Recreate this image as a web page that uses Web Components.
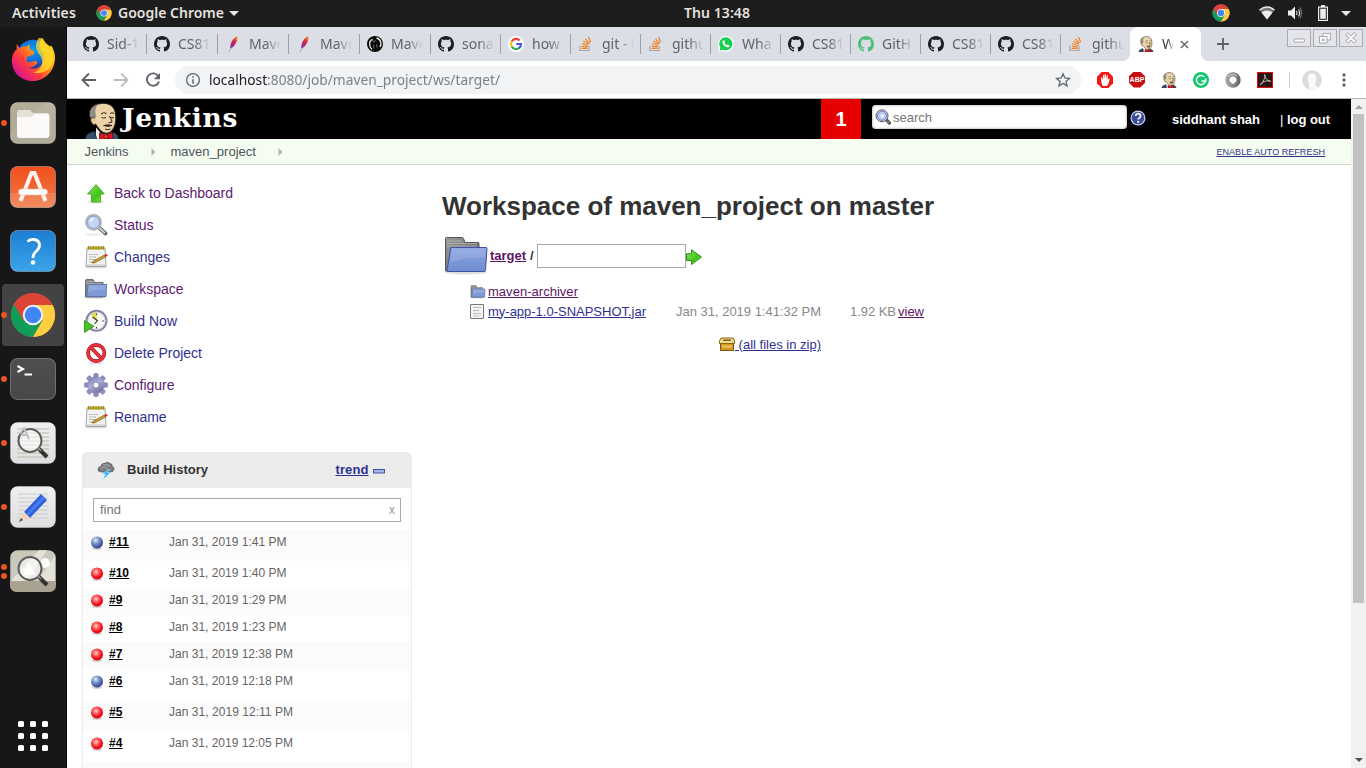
<!DOCTYPE html>
<html lang="en">
<head>
<meta charset="utf-8">
<title>Workspace of maven_project on master [Jenkins]</title>
<style>
html,body{margin:0;height:100%;overflow:hidden}
body{font-family:"Liberation Sans",Arial,sans-serif;font-size:13px;color:#333}
</style>
</head>
<body>
<desktop-shell>
  <gnome-bar slot="top"></gnome-bar>
  <side-dock slot="dock"></side-dock>
  <browser-window>
    <tab-strip slot="tabs">
      <browser-tab icon="github" first>Sid-1</browser-tab>
      <browser-tab icon="github">CS81</browser-tab>
      <browser-tab icon="feather">Mave</browser-tab>
      <browser-tab icon="feather">Mave</browser-tab>
      <browser-tab icon="mvnrepo">Mave</browser-tab>
      <browser-tab icon="github" narrow>sona</browser-tab>
      <browser-tab icon="google" narrow>how</browser-tab>
      <browser-tab icon="stack" narrow>git - l</browser-tab>
      <browser-tab icon="stack" narrow>githu</browser-tab>
      <browser-tab icon="whatsapp" narrow>Wha</browser-tab>
      <browser-tab icon="github" narrow>CS81</browser-tab>
      <browser-tab icon="github" narrow style="--ink:#4cbf7b">GitH</browser-tab>
      <browser-tab icon="github" narrow>CS81</browser-tab>
      <browser-tab icon="github" narrow>CS81</browser-tab>
      <browser-tab icon="stack" narrow>githu</browser-tab>
      <browser-tab icon="butler" active>W</browser-tab>
    </tab-strip>
    <url-bar slot="toolbar"></url-bar>
    <jenkins-page>
      <side-task icon="up" w="119" visited>Back to Dashboard</side-task>
      <side-task icon="search" w="39.5" visited>Status</side-task>
      <side-task icon="notepad" w="56">Changes</side-task>
      <side-task icon="folder" w="69.5" visited>Workspace</side-task>
      <side-task icon="clock" w="63">Build Now</side-task>
      <side-task icon="forbid" w="88">Delete Project</side-task>
      <side-task icon="gear" w="60.5" visited>Configure</side-task>
      <side-task icon="notepad" w="52.5">Rename</side-task>
      <build-history slot="history">
        <build-row ball="blue" tall n="#11">Jan 31, 2019 1:41 PM</build-row>
        <build-row ball="red" n="#10">Jan 31, 2019 1:40 PM</build-row>
        <build-row ball="red" n="#9">Jan 31, 2019 1:29 PM</build-row>
        <build-row ball="red" n="#8">Jan 31, 2019 1:23 PM</build-row>
        <build-row ball="red" n="#7">Jan 31, 2019 12:38 PM</build-row>
        <build-row ball="blue" tall n="#6">Jan 31, 2019 12:18 PM</build-row>
        <build-row ball="red" tall n="#5">Jan 31, 2019 12:11 PM</build-row>
        <build-row ball="red" tall n="#4">Jan 31, 2019 12:05 PM</build-row>
        <build-row tall></build-row>
      </build-history>
      <workspace-view slot="main"></workspace-view>
    </jenkins-page>
  </browser-window>
</desktop-shell>
<script>
const UI = '"Noto Sans","Open Sans",sans-serif';

const BUTLER = `<path d="M.5 37.500c0-4.500 3-6.500 8-8l8 3 9-2 4 .5c3 1 3.500 3.500 4 6.500z" fill="#34516b" stroke="#1b2a38"/>
<path d="M4.500 11C5 5 11 1.200 18 1.200c8 0 12.500 5 12.800 13 .3 6-1 11.500-4.300 15-3 3-8 2.500-11-.5-2-2-3.500-4.500-5-6.500-4-1-5.500-6-6-11.200z" fill="#ecd4a8" stroke="#2b211b" stroke-width="1.100"/>
<path d="M4.800 14C4.500 8 7.500 4 13 2.300 10 6 10 10 11 14l-2 5-2-2z" fill="#8f8b88"/>
<path d="M9.500 16c-3-1.500-4.500 1-3.500 3.500.5 2 2 3.500 4 3.500" fill="#e6c696" stroke="#2b211b" stroke-width=".9"/>
<path d="M16 12q3-2.500 5.500-.5M25 11.500q2-1.500 4 0M16.500 15.500q2 1.200 4.500 0M25.500 15.500q1.500 1 3.500 0M24.500 14c1 3 3 4.500 2.300 6.200l-3.200.6" fill="none" stroke="#2b211b" stroke-width="1"/>
<path d="M18.500 23.500q4.500-1.700 8.500 0-3.500 2-8.500 0zM20 27q3 1.500 5.500 0" fill="#4a3528" stroke="#2b211b" stroke-width=".8"/>
<path d="M11 25.500l5 6 6 1-2 5h-9z" fill="#f4f1ec"/><path d="M9 29l3 8.500" stroke="#1b2a38"/>
<path d="M14.500 31l6 2 7-2.500.5 7-7-1.500-6.500 2z" fill="#dc1420" stroke="#5d0408" stroke-width=".7"/><circle cx="21" cy="34.500" r="2" fill="#f4303a" stroke="#5d0408" stroke-width=".6"/>`;
const CHROME = `<circle cx="24" cy="24" r="23" fill="#db4437"/><path d="M4.100 12.500A23 23 0 0 0 24 47l10-17.500-20 0z" fill="#0f9d58"/><path d="M24 47A23 23 0 0 0 44.500 13.500H24l10 16z" fill="#ffcd40"/><path d="M4.100 12.500A23 23 0 0 1 44.500 13.500H24L14 29.500z" fill="#db4437"/><circle cx="24" cy="24" r="10.700" fill="#f1f1f1"/><circle cx="24" cy="24" r="8.600" fill="#4285f4"/>`;
const ARROW = `<defs><linearGradient id="g" x1="0" y1="0" x2="1" y2="1"><stop stop-color="#8fe86a"/><stop offset=".6" stop-color="#3fc518"/><stop offset="1" stop-color="#8ef43a"/></linearGradient></defs>`;
const FOLDER = `<defs><linearGradient id="f" x1="0" y1="0" x2="0" y2="1"><stop stop-color="#89a3df"/><stop offset="1" stop-color="#6f8ed0"/></linearGradient><linearGradient id="fg" x1="0" y1="0" x2="1" y2="1"><stop stop-color="#999"/><stop offset="1" stop-color="#606060"/></linearGradient></defs>
<ellipse cx="22" cy="36" rx="21" ry="2.500" fill="#000" opacity=".13"/><path d="M1.500 35V2.500q0-1 1-1H18q1 0 1.500 1l1.500 4H34q1 0 1 1V34z" fill="url(#fg)" stroke="#555"/><path d="M3 5h15M3 7.500h30M3 10h30" stroke="#bbb" stroke-width=".7"/><path d="M7 11.500h35q1 0 1 1l-1.500 22q-.2 1-1.200 1H4q-1.500 0-1-1.500z" fill="url(#f)" stroke="#3f51a8"/><path d="M7.500 12.500h34l-.8 9Q22 21 6.500 26z" fill="#fff" opacity=".13"/>`;
const SMALL_FOLDER = `<ellipse cx="12" cy="20.500" rx="11" ry="1.200" fill="#000" opacity=".14"/><path d="M1.500 20V3.500q0-1 1-1H9l1.500 3H19V20z" fill="#858585" stroke="#6a6a6a"/><path d="M2 4.500h7M2 6.500h16" stroke="#b5b5b5" stroke-width=".8"/><path d="M4 7.500h18.500L22 19.500H2.800z" fill="#7f9ad6" stroke="#5c73b8"/><path d="M4.500 8h17.500l-.3 5Q11 12.500 4 15z" fill="#fff" opacity=".15"/>`;
const tile = (a,b,inner) => `<defs><linearGradient id="t" x1="0" y1="0" x2="0" y2="1"><stop stop-color="${a}"/><stop offset="1" stop-color="${b}"/></linearGradient></defs><rect x="1.500" y="3.500" width="45" height="41" rx="7" fill="url(#t)" stroke="#fff" stroke-opacity=".3"/>${inner}`;
const LENS = `<circle cx="21" cy="21.500" r="11.500" fill="#fff" fill-opacity=".6" stroke="#5c5c5c" stroke-width="2"/><path d="M30 30l8 8" stroke="#333" stroke-width="4"/><path d="M29 29l3 3" stroke="#888" stroke-width="2"/>`;

const ICONS = {
  github:['0 0 16 16',`<path fill="var(--ink,#1b1f23)" fill-rule="evenodd" d="M8 0C3.580 0 0 3.580 0 8c0 3.540 2.290 6.530 5.470 7.590.4.070.55-.17.55-.38 0-.19-.01-.82-.01-1.490-2.010.37-2.530-.49-2.690-.94-.09-.23-.48-.94-.82-1.130-.28-.15-.68-.52-.01-.53.63-.01 1.080.58 1.230.82.72 1.210 1.870.87 2.330.66.07-.52.28-.87.51-1.070-1.780-.2-3.640-.89-3.640-3.950 0-.87.31-1.590.82-2.150-.08-.2-.36-1.020.08-2.120 0 0 .67-.21 2.200.82.64-.18 1.320-.27 2-.27s1.360.09 2 .27c1.530-1.040 2.200-.82 2.200-.82.44 1.100.16 1.920.08 2.120.51.56.82 1.270.82 2.150 0 3.070-1.870 3.750-3.650 3.950.29.25.54.73.54 1.480 0 1.070-.01 1.930-.01 2.200 0 .21.15.46.55.38A8.010 8.010 0 0 0 16 8c0-4.420-3.580-8-8-8z"/>`],
  feather:['0 0 16 16',`<defs><linearGradient id="a" x1=".8" y1="0" x2=".2" y2="1"><stop stop-color="#f79a23"/><stop offset=".35" stop-color="#e0323a"/><stop offset=".65" stop-color="#b5206a"/><stop offset="1" stop-color="#6f4ba0"/></linearGradient></defs><path d="M12 0c1 2 .3 5-1.300 7.500C9 10 7.500 12 6 12.500l-1 0C5 10 6 6 8 3.500 9.500 1.500 11 .5 12 0z" fill="url(#a)"/><path d="M6 11.500L4.200 16" stroke="#b8a6cf"/>`],
  mvnrepo:['0 0 16 16',`<circle cx="8" cy="8" r="8" fill="#0a0a0a"/><path d="M5 13.500C1.500 10 2 5 5.500 3M9.500 2c4.500 1 5.500 6 3.500 9" stroke="#e8e8ea" stroke-width="1.300" fill="none"/><path d="M5 4.500l2 1.500 1.500-2M6.500 9l.5 3.500M9.500 8.500l.5 3" stroke="#999" stroke-width=".7" fill="none"/>`],
  google:['0 0 16 16',`<circle cx="8" cy="8" r="8" fill="#fff"/><g fill="none" stroke-width="2.200"><path d="M11.700 4.400A5 5 0 0 0 3.700 5.600" stroke="#ea4335"/><path d="M3.700 5.500a5 5 0 0 0 0 5" stroke="#fbbc05"/><path d="M3.700 10.400a5 5 0 0 0 7.800 1.300" stroke="#34a853"/><path d="M11.200 12A5 5 0 0 0 13 8H8.200" stroke="#4255f4"/></g>`],
  stack:['0 0 16 16',`<path d="M1.800 9.800v4.700h9.400V9.800" fill="none" stroke="#a9a9ad" stroke-width="1.200"/><g stroke="#f48024" stroke-width="1.200"><path d="M3.500 12.400h6.200M3.600 10.200l6.100.6M4 7.500l6 2M5.300 5l5.200 3.300M7.500 2.800l3.900 4.700M10.500 1l2.200 5.500"/></g>`],
  whatsapp:['0 0 16 16',`<path d="M0 16l1.200-4A7.800 7.800 0 1 1 4.500 15z" fill="#fff"/><path d="M1.600 14.500l.8-3A6.500 6.500 0 1 1 5 13.700z" fill="#12cf4e"/><path d="M5.200 4.500l1-.3 1 2-.7.900c.5 1 1.200 1.700 2.300 2.200l.8-.9 1.900 1c0 1.500-1.300 2-2.300 1.800C6.700 10.600 4.700 8.500 4.400 6.200c0-.7.300-1.300.8-1.700z" fill="#fff"/>`],
  butler:['0 0 34 37',BUTLER],
  chrome:['0 0 48 48',CHROME],
  firefox:['0 0 48 48',`<defs><radialGradient id="b" cx=".5" cy=".3" r=".6"><stop stop-color="#0ca0ea"/><stop offset=".6" stop-color="#1468d8"/><stop offset="1" stop-color="#20227c"/></radialGradient><linearGradient id="o" x1=".9" y1=".1" x2=".15" y2=".85"><stop stop-color="#ffe22b"/><stop offset=".4" stop-color="#ff9a17"/><stop offset=".7" stop-color="#ff3c3c"/><stop offset="1" stop-color="#dd1590"/></linearGradient></defs>
<circle cx="24" cy="22" r="18" fill="url(#b)"/><path d="M7 8l3 5q3-3 8-2l2-3 1 6 4 2v3l-7 3-1 4c3 3 6 0 9 0 2 0 3 2 2 3-2 1-3 4-8 4 7 3 14-1 15-8 1-5-1-8-3-11-2-5-1-9 2-12l0 0q2 5 8 9l1-1q4 6 4 14C46 37 36 47 24 47 12 47 2 38 2 26c0-6 2-10 5-12z" fill="url(#o)"/><path d="M30 2c-6 9-1 15 2 19 4 7 0 16-8 17 12 3 22-5 21-16-1-10-12-12-12-20z" fill="#ffdf2a" opacity=".75"/>`],
  files:['0 0 48 48',tile('#b5ae9b','#aaa490',`<path d="M1 33L38 3h2q7 0 7 7v28q0 7-7 7H8q-7 0-7-7z" fill="#fff" opacity=".09"/><path d="M8 14q0-3 3-3h9q2 0 3 2l1 1h14q2 0 2 2v20H8z" fill="#e5e1da"/><path d="M8 20q0-2 2-2h12l4-3h13q1.500 0 1.500 1.500V35q0 4-3 4H11q-3 0-3-3z" fill="#faf9f7"/>`)],
  software:['0 0 48 48',tile('#f2501e','#f07a48',`<path d="M1 30h46v8q0 7-7 7H8q-7 0-7-7z" fill="#fff" opacity=".12"/><path d="M11.500 38L22.500 10h3L36.500 38" fill="none" stroke="#fdf4ef" stroke-width="4"/><rect x="9.500" y="26" width="29" height="6" rx="3" fill="#fff" stroke="#f1b99f" stroke-width=".6"/>`)],
  help:['0 0 48 48',tile('#1d7ed0','#3aa5ea',`<path d="M18.500 14.500q3-2.500 6.500-2 5.500.8 5.500 6 0 3-3.500 6-3 2.500-3 6.500" fill="none" stroke="#fff" stroke-width="2.800"/><circle cx="24" cy="35.500" r="2.200" fill="#fff"/>`)],
  terminal:['0 0 48 48',tile('#4e4e4e','#484848',`<path d="M8.500 11l5.500 3-5.500 3M15.500 19.500H23" fill="none" stroke="#fff" stroke-width="2"/>`)],
  docview:['0 0 48 48',tile('#f0f0f0','#dedede',`<path d="M8 10h32M8 14h32M8 18h32M8 22h32M8 26h32M8 30h32M8 34h32M8 38h32" stroke="#bcb9ab"/>${LENS}<path d="M11 15L15 9l5 11M13 16h5" fill="none" stroke="#c0c0c0" stroke-width="2"/>`)],
  editor:['0 0 48 48',tile('#f0f0f0','#dedede',`<path d="M9 11h30M9 15h30M9 19h30M9 23h30M9 27h30M9 31h30M9 35h30" stroke="#ccc"/><path d="M32 11l6 6-17 18-6-6z" fill="#2e62dd"/><path d="M34 13l2 2-17 18-2-2z" fill="#4a7bf0"/><path d="M15 29l6 6-11 4z" fill="#f5d3b4"/><path d="M12 35l2 2-4 2z" fill="#444"/>`)],
  imgview:['0 0 48 48',tile('#c9c6ba','#cfcbbf',`<path d="M2 34L30 3h8L18 34zM28 34L46 9v25z" fill="#eeece4" opacity=".7"/><path d="M1 34h46v4q0 7-7 7H8q-7 0-7-7z" fill="#a9a290"/><circle cx="36" cy="16" r="5" fill="#fafafa"/>${LENS}<path d="M13 28l7-13 7 13z" fill="#fff" opacity=".8"/>`)],
  apps:['0 0 32 32',`<g fill="#fff">${[1,13,25].map(x=>[1,13,25].map(y=>`<rect x="${x}" y="${y}" width="6" height="6" rx="1.500"/>`).join('')).join('')}</g>`],
  caret:['0 0 10 5',`<path d="M0 0h10L5 5z" fill="#e6e6e6"/>`],
  wifi:['0 0 16 14',`<path d="M8 13.500L.5 4Q8-2 15.500 4z" fill="#777"/><path d="M8 13.500L2.500 6.500Q8 2.500 13.500 6.500z" fill="#eee"/><path d="M.5 4Q8-2 15.500 4" stroke="#eee" stroke-width="1.300" fill="none"/>`],
  volume:['0 0 16 14',`<path d="M1 4.500h3L8 .5v13L4 9.500H1z" fill="#eee"/><path d="M9.500 5q1.300 2 0 4M11.500 3.500q2.300 3.500 0 7" stroke="#ddd" stroke-width="1.200" fill="none"/><path d="M13 1.500q3 5.500 0 11" stroke="#777" stroke-width="1.100" fill="none"/>`],
  battery:['0 0 10 16',`<path d="M3 0h4v1.500h3V16H0V1.500h3z" fill="#eee"/><path d="M1.200 2.700h7.600v12.100H1.200z" fill="#1d1d1d"/><path d="M2.200 3.700h5.600v10.100H2.200z" fill="#eee"/>`],
  back:['0 0 16 16',`<path d="M15 8H2M8 1.500L1.500 8 8 14.500" fill="none" stroke="var(--ink,#5f6368)" stroke-width="1.900"/>`],
  fwd:['0 0 16 16',`<path d="M1 8h13M8 1.500L14.500 8 8 14.500" fill="none" stroke="#bbbdc0" stroke-width="1.900"/>`],
  reload:['0 0 16 16',`<path d="M13.500 4.500A6.200 6.200 0 1 0 14 9.500" fill="none" stroke="#5f6368" stroke-width="1.900"/><path d="M15 1v6.200H8.800z" fill="#5f6368"/>`],
  info:['0 0 16 16',`<circle cx="8" cy="8" r="6.400" fill="none" stroke="#5f6368" stroke-width="1.300"/><path d="M8 4.300v1.500M8 7.200v4.500" stroke="#5f6368" stroke-width="1.500"/>`],
  star:['0 0 16 16',`<path d="M8 1.800l1.800 4.200 4.600.4-3.500 3 1.100 4.400L8 11.500 4 13.800l1.100-4.400-3.500-3L6.200 6z" fill="none" stroke="#5f6368" stroke-width="1.300"/>`],
  stop:['0 0 16 16',`<path d="M4.700 0h6.600L16 4.700v6.600L11.300 16H4.700L0 11.300V4.700z" fill="#f21616"/><path d="M5.500 14L4.300 10 4 5.500l1-.3L6.200 8 6 3l1-.2L7.500 7l.2-5h1l.4 5 .8-4 1 .2-.2 5 1-1.700 1 .3-1 4.200L10 14z" fill="#fff"/>`],
  gram:['0 0 16 16',`<circle cx="8" cy="8" r="8" fill="#11c76f"/><path d="M11.500 5A4.600 4.600 0 1 0 12.500 9M12.900 8.900H8.500M12.700 6.500L12.500 10" fill="none" stroke="#fff" stroke-width="1.500"/>`],
  ring:['0 0 16 16',`<defs><linearGradient id="r"><stop stop-color="#aaa"/><stop offset=".6" stop-color="#808080"/><stop offset="1" stop-color="#606060"/></linearGradient></defs><circle cx="8" cy="8" r="7.700" fill="url(#r)"/><path d="M8 12Q4 10 4.500 7 5.500 4.200 8 4.200T11.500 7Q12 10 8 12z" fill="#fff"/><path d="M3 4.500q5-4 9-.5" fill="none" stroke="#c5c5c5" stroke-width="1.300"/>`],
  acrobat:['0 0 16 16',`<rect x=".5" y=".5" width="15" height="15" fill="#2b1414" stroke="#e30b0b"/><path d="M7.500 3c1.500 4 3 6 5.500 6.500 1 0 .5-1-1-.9C8.500 8.700 5.500 10 3.500 12c-.8.800.5 1 1.200-.3C6.500 9 8 6 8 3.500c0-1-.8-1-.5-.5z" fill="none" stroke="#ddd" stroke-width=".8"/>`],
  person:['0 0 20 20',`<circle cx="10" cy="10" r="9.900" fill="#dcdcdc"/><path d="M10 3.500c3.300 0 4.500 2.500 4.200 5.500-.2 2.500-1.200 4-1 5.500l2.500 2.500-2 2h-6l-1-2c.8-2 .5-3.500-.2-5C5 8 6 3.500 10 3.500z" fill="#fbfbfb"/>`],
  more:['0 0 4 16',`<g fill="#5f6368"><circle cx="2" cy="3" r="1.650"/><circle cx="2" cy="8" r="1.650"/><circle cx="2" cy="13" r="1.650"/></g>`],
  close:['0 0 10 10',`<path d="M1 1l8 8M9 1L1 9" stroke="#5f6368" stroke-width="1.500"/>`],
  plus:['0 0 12 12',`<path d="M6 0v12M0 6h12" stroke="#5f6368" stroke-width="1.900"/>`],
  wmin:['0 0 24 18',`<rect x=".5" y=".5" width="23" height="17" fill="#e4e5ea" stroke="#abacb1"/><rect x="7" y="10" width="10.500" height="3" rx="1" fill="#fff" stroke="#a5a6ab"/>`],
  wmax:['0 0 24 18',`<rect x=".5" y=".5" width="23" height="17" fill="#e4e5ea" stroke="#abacb1"/><path d="M10 4.500h7.500V11H10z" fill="#fff" stroke="#a5a6ab"/><path d="M6.500 7.500h7.500V14H6.500z" fill="#fff" stroke="#a5a6ab"/><path d="M9 10h2.500v1.500H9z" fill="#ddd" stroke="#a5a6ab" stroke-width=".7"/>`],
  wclose:['0 0 24 18',`<rect x=".5" y=".5" width="23" height="17" fill="#e4e5ea" stroke="#abacb1"/><path d="M7.500 4.500l9 9M16.500 4.500l-9 9" stroke="#a5a6ab" stroke-width="3.800"/><path d="M8 5l8 8M16 5l-8 8" stroke="#fff" stroke-width="1.900"/>`],
  search:['0 0 24 24',`<ellipse cx="9" cy="21.500" rx="8" ry="1.300" fill="#000" opacity=".08"/><path d="M15 14.500l6.500 6" stroke="#666" stroke-width="3.800" stroke-linecap="round"/><path d="M15.500 15l5 4.700" stroke="#d5d5d5" stroke-width="1.800" stroke-linecap="round"/><circle cx="9.500" cy="9.300" r="7.500" fill="#c8d8f8" stroke="#b0b0b0" stroke-width="1.800"/><circle cx="9.500" cy="9.300" r="6" fill="#c6d6f7" stroke="#7a92cc" stroke-width=".8"/><path d="M5 8.500q1-4 5-4-1 4-5 4z" fill="#fff" opacity=".7"/>`],
  find16:['0 0 16 16',`<path d="M11.500 11l3 3" stroke="#555" stroke-width="3.200" stroke-linecap="round"/><path d="M12.500 12l1.500 1.500" stroke="#aaa" stroke-linecap="round"/><circle cx="7" cy="6.800" r="6" fill="#f0f0f0" stroke="#5b5b5b"/><circle cx="7" cy="6.800" r="4.600" fill="#b9cbf3" stroke="#657fc6"/><circle cx="7.300" cy="7" r="2" fill="#e6effd"/>`],
  help16:['0 0 16 16',`<circle cx="8" cy="8" r="7.500" fill="#cbd3f5"/><circle cx="8" cy="8" r="6.300" fill="#3c4c9c"/><path d="M5.700 6q0-2.300 2.500-2.300T10.500 6q0 1.200-1.300 1.900-.9.500-.9 1.500" fill="none" stroke="#fff" stroke-width="1.700"/><circle cx="8.200" cy="11.800" r="1.100" fill="#fff"/>`],
  up:['0 0 24 24',`${ARROW}<ellipse cx="12" cy="21.300" rx="9" ry="1.300" fill="#000" opacity=".12"/><path d="M12 3.500l8.300 9.500H16.500V21H7.500v-8H3.500z" fill="url(#g)" stroke="#399a1d" stroke-width=".8"/>`],
  go:['0 0 16 16',`${ARROW}<path d="M.5 4.800h5V.8L15.500 8l-10 7.500v-4h-5z" fill="url(#g)" stroke="#2c8a14"/>`],
  notepad:['0 0 24 24',`<ellipse cx="12" cy="22.800" rx="11" ry="1" fill="#000" opacity=".1"/><path d="M3 3h18l1 18.500H2z" fill="#f3f3f1" stroke="#8a8a88" stroke-width=".8"/><path d="M3.500 1.500h17V4.500h-17z" fill="#bdb52f"/><path d="M4.500 1v3.500M7 1v3.500M9.500 1v3.500M12 1v3.500M14.500 1v3.500M17 1v3.500M19.500 1v3.500" stroke="#837b1c" stroke-width=".9"/><path d="M5 9.500h9M5 12h7M5 14.500h8M5 17h5" stroke="#bbb"/><path d="M2 20h20" stroke="#c4c4c4"/><path d="M9.500 16L20.500 10l1 2L11 17.700 8 18z" fill="#d7a32c" stroke="#7a5612" stroke-width=".7"/><path d="M20.500 10l2-1 1.300 1.500-2 1.500z" fill="#d22"/>`],
  folder:['0 -1 44 42',FOLDER],
  folder24:['0 0 24 24',SMALL_FOLDER],
  clock:['0 0 24 24',`<circle cx="12.500" cy="11.800" r="10" fill="#eeeef0" stroke="#8884a0" stroke-width="2"/><circle cx="12.500" cy="11.800" r="8.600" fill="#f8f8f5" stroke="#cac8d6" stroke-width=".8"/><path d="M12.500 12L7 5.500q4-3 6-1.500z" fill="#e2dc52"/><path d="M12.500 4.500V6M12.500 18v1.500M18.500 12H20M8.500 8l5 3.700-3 3.300" stroke="#333" stroke-width="1.100" fill="none"/><path d="M.5 11.500L10 17.300.5 23.500z" fill="#43c425" stroke="#2d8a1a" stroke-width=".8"/>`],
  forbid:['0 0 24 24',`<ellipse cx="12" cy="22.300" rx="8" ry="1.200" fill="#000" opacity=".12"/><circle cx="12.200" cy="12" r="8.200" fill="#fff" stroke="#a81016" stroke-width="3.700"/><path d="M6.500 6l11.500 12" stroke="#a81016" stroke-width="3.700"/><circle cx="12.200" cy="12" r="8.200" fill="none" stroke="#e2343a" stroke-width="2.600"/><path d="M6.500 6l11.500 12" stroke="#e2343a" stroke-width="2.600"/>`],
  gear:['0 0 24 24',`<defs><linearGradient id="k" x1="0" y1="0" x2=".6" y2="1"><stop stop-color="#6a71b0"/><stop offset=".5" stop-color="#aeb0d8"/><stop offset="1" stop-color="#75719f"/></linearGradient></defs><g fill="#8d8fc0" stroke="#77769e" stroke-width=".6">${[0,45,90,135,180,225,270,315].map(a=>`<path d="M9.300 5.500L10 .8Q12-.2 14 .8L14.700 5.500z" transform="rotate(${a} 12 12)"/>`).join('')}</g><circle cx="12" cy="12" r="8" fill="url(#k)"/><circle cx="12" cy="12" r="3" fill="#fff" stroke="#77769e" stroke-width=".8"/>`],
  storm:['0 0 18 18',`<path d="M4 11Q.5 10.500 1 8q.5-2.500 3-2.500Q4.500 2 8 2.200q2.500-2 5 .3 2.500.2 2.300 3Q17.500 6 17 8.500q-.5 2.500-4 2.500z" fill="#7c7c7e" stroke="#555" stroke-width=".7"/><path d="M3.500 7.500q4-3 7 0M6 4q4-1 7 1" stroke="#a9a9a9" fill="none" stroke-width="1"/><path d="M11 8.500L5.500 13h3l-2 5 7-6.500h-3l2.500-3z" fill="#3fb2f2" stroke="#8fdcff" stroke-width=".5"/>`],
  minus:['0 0 12 5',`<rect x=".5" y=".5" width="11" height="3.500" fill="#a8b8e0" stroke="#3b55a3"/>`],
  blue:['0 0 14 14',`<defs><radialGradient id="q" cx=".38" cy=".3" r=".7"><stop stop-color="#e8f0ee"/><stop offset=".4" stop-color="#7f98cd"/><stop offset="1" stop-color="#2b3c92"/></radialGradient></defs><ellipse cx="7" cy="12.500" rx="5" ry="1.300" fill="#000" opacity=".2"/><circle cx="7" cy="6.600" r="6" fill="url(#q)"/>`],
  red:['0 0 14 14',`<defs><radialGradient id="q" cx=".42" cy=".36" r=".65"><stop stop-color="#ffd0d0"/><stop offset=".4" stop-color="#ff5a5a"/><stop offset=".75" stop-color="#f80816"/><stop offset="1" stop-color="#d80510"/></radialGradient></defs><ellipse cx="7" cy="12.500" rx="5" ry="1.300" fill="#000" opacity=".2"/><circle cx="7" cy="6.600" r="6" fill="url(#q)"/>`],
  text:['0 0 14 16',`<rect x=".5" y=".5" width="13" height="14" rx=".5" fill="#f4f4f4" stroke="#777"/><path d="M3 3.500h8M3 6.500h6M3 9.500h8M3 12h6" stroke="#b8b8b8"/>`],
  zip:['0 0 16 14',`<path d="M1.500 5.500h13v8h-13z" fill="#d49a28" stroke="#7b5306"/><path d="M2 1h12l1.500 3v2.500H.5V4z" fill="#f0dc96" stroke="#8a6510"/><path d="M4 3.200h8" stroke="#7b5306" stroke-width="1.400"/><path d="M3 9.500h10" stroke="#edc45e" stroke-width="2"/>`],
  crumb:['0 0 5 8',`<path d="M.5 0v8L4.500 4z" fill="#b4b4b4"/>`],
};

/* Registers an element whose shadow root holds the given styles and markup. */
function element(name, css, html, after) {
  customElements.define(name, class extends HTMLElement {
    constructor() {
      super();
      this.attachShadow({mode:'open'});
    }
    connectedCallback() {
      if (this.shadowRoot.firstChild) return;
      const body = typeof html === 'function' ? html(this) : html;
      this.shadowRoot.innerHTML = `<style>*,:host{box-sizing:border-box}${css}</style>${body}`;
      if (after) after(this);
    }
  });
}
const icon = (n,w,h=w,style='') => `<ui-icon name="${n}" style="width:${w}px;height:${h}px;${style}"></ui-icon>`;
const fit = (t,w,cls='') => `<fit-text w="${w}" class="${cls}">${t}</fit-text>`;

element('ui-icon', `:host{display:block;flex:none}svg{display:block;width:100%;height:100%}`,
  el => { const [vb,body] = ICONS[el.getAttribute('name')]; return `<svg viewBox="${vb}">${body}</svg>`; });

element('desktop-shell', `:host{display:grid;grid-template:27px 741px/67px 1299px;width:1366px;height:768px;overflow:hidden}
  .t{grid-column:1/3;min-width:0}.d{min-width:0}.w{min-width:0}`,
  `<div class="t"><slot name="top"></slot></div><div class="d"><slot name="dock"></slot></div><div class="w"><slot></slot></div>`);

element('gnome-bar', `:host{display:grid;grid-template-columns:684px 66px 1fr;height:27px;background:#1d1d1d;color:#e4e2df;font:600 14px/26px ${UI}}
  div{display:flex;align-items:center;height:26px}.l{padding-left:12px}.r{justify-content:flex-end;padding-right:15px}`,
  `<div class="l">${fit('Activities',64)}${icon('chrome',16,16,'margin:0 6px 0 20px')}${fit('Google Chrome',106)}${icon('caret',10,5,'margin-left:5px')}</div>
   <div>${fit('Thu 13:48',66)}</div>
   <div class="r">${icon('chrome',18,18,'margin-right:29px')}${icon('wifi',16,14,'margin-right:12px')}${icon('volume',16,14,'margin-right:15px')}${icon('battery',10,16,'margin-right:13px')}${icon('caret',10,5)}</div>`);

element('dock-item', `:host{display:grid;grid-template-columns:7px 48px;align-items:center;height:62px;width:62px;margin-left:2px;border-radius:4px}
  :host([active]){background:#434343}.p{display:grid;gap:3px;margin-left:-1px}.p i{width:6px;height:6px;border-radius:50%;background:#e95420}
  .k{display:grid;place-items:center}`,
  el => { const n = el.getAttribute('icon'), s = n=='chrome'||n=='firefox' ? 46 : 48;
    return `<div class="p">${'<i></i>'.repeat(+el.getAttribute('dots')||0)}</div><div class="k">${icon(n,s)}</div>`; });

element('side-dock', `:host{display:flex;flex-direction:column;gap:2px;height:741px;background:#171717;padding-top:1px;box-shadow:inset -1px 0 #050505}
  dock-item{flex:none}`,
  [['firefox',0],['files',1],['software',0],['help',0],['chrome',1,'active'],['terminal',1],['docview',1],['editor',1],['imgview',2]]
   .map(([n,d,a='']) => `<dock-item icon="${n}" dots="${d}" ${a}></dock-item>`).join('') + icon('apps',32,32,'margin:auto 0 16px 17px'));

element('browser-window', `:host{display:grid;grid-template-rows:34px 38px 669px;height:741px;background:#fff}`,
  `<slot name="tabs"></slot><slot name="toolbar"></slot><slot></slot>`);

element('tab-strip', `:host{display:flex;background:#dcdee6;padding-left:8px;height:34px;min-width:0}
  .win{display:flex;gap:2px;margin:2px 3px 0 auto}`,
  `<slot></slot>${icon('plus',12,12,'margin:11px 0 0 16px')}<div class="win">${icon('wmin',24,18)}${icon('wmax',24,18)}${icon('wclose',24,18)}</div>`);

element('browser-tab', `:host{display:flex;align-items:center;flex:none;width:71px;height:34px;font:14px/34px ${UI};color:#5f6368;
   background:linear-gradient(#9d9fa6,#9d9fa6) 0 7px/1px 20px no-repeat}
  :host([narrow]){width:70px}:host([first]){background:none}
  ui-icon{margin-left:8px}
  .t{width:33px;margin-left:8px;overflow:hidden;white-space:nowrap;-webkit-mask:linear-gradient(90deg,#000 50%,transparent 98%);mask:linear-gradient(90deg,#000 50%,transparent 98%)}
  :host([active]){background:#fff;border-radius:8px 8px 0 0;color:#3c4043;position:relative}
  :host([active])::before,:host([active])::after{content:"";position:absolute;bottom:0;width:8px;height:8px}
  :host([active])::before{left:-8px;background:radial-gradient(circle at 0 0,transparent 8px,#fff 8px)}
  :host([active])::after{right:-8px;background:radial-gradient(circle at 100% 0,transparent 8px,#fff 8px)}
  :host([active]) .t{width:12px}`,
  el => `${icon(el.getAttribute('icon'),16)}<div class="t"><slot></slot></div>${el.hasAttribute('active')?icon('close',9,9,'margin-left:6px'):''}`);

element('url-bar', `:host{display:flex;align-items:center;height:38px;background:#fff;border-bottom:1px solid #b3b5b8;font:14.500px/28px ${UI};color:#7c8085}
  .box{display:flex;align-items:center;width:906px;height:28px;border-radius:14px;background:#f1f3f4;margin-left:14px;padding:0 10px;flex:none}
  .addr{margin:-2px 0 0 8px}b{font-weight:400;color:#202124}
  .abp{width:16px;height:16px;background:#c70d12;clip-path:polygon(30% 0,70% 0,100% 30%,100% 70%,70% 100%,30% 100%,0 70%,0 30%);color:#fff;font:700 7px/16px "Liberation Sans",sans-serif;text-align:center;margin-right:16px}`,
  `${icon('back',16,16,'margin-left:14px')}${icon('fwd',16,16,'margin-left:16px')}${icon('reload',16,16,'margin-left:16px')}
   <div class="box">${icon('info',16)}<span class="addr">${fit('<b>localhost</b>:8080/job/maven_project/ws/target/',291)}</span>${icon('star',16,16,'margin-left:auto')}</div>
   ${icon('stop',16,16,'margin:0 16px')}<div class="abp">ABP</div>${icon('butler',16,16,'margin-right:16px')}${icon('gram',16,16,'margin-right:16px')}${icon('ring',16,16,'margin-right:16px')}${icon('acrobat',16,16,'margin-right:16px')}
   <i style="width:1px;height:16px;background:#d0d0d3;margin-right:12px"></i>${icon('person',20,20,'margin-right:20px')}${icon('more',4,16)}`);

element('jenkins-page', `:host{display:grid;grid-template:40px 26px 603px/1284px 15px;height:669px;min-width:0}
  page-head,crumb-trail,.body{grid-column:1}page-scroll{grid-column:2;grid-row:1/4}
  .body{display:grid;grid-template-columns:360px 1fr;overflow:hidden}
  .side{padding:12px 0 0 15px}.tasks{height:275px}`,
  `<page-head></page-head><crumb-trail></crumb-trail>
   <div class="body"><div class="side"><div class="tasks"><slot></slot></div><slot name="history"></slot></div><slot name="main"></slot></div>
   <page-scroll></page-scroll>`);

element('page-head', `:host{display:flex;height:40px;background:#000;color:#fff;font-weight:700}
  .logo{display:flex;width:754px;padding-left:18px;overflow:hidden}
  .name{font:700 26.500px/37px "DejaVu Serif",serif;margin-left:3px}
  .n{width:40px;background:#e60000;text-align:center;font-size:20px;line-height:40px}
  .q{display:flex;align-items:center;width:255px;height:24px;margin:6px 3px 0 11px;padding:0 3px;border-radius:4px;background:#fff;box-shadow:inset 0 0 3px #999;color:#757575;font-weight:400}
  .u{line-height:41px;margin-left:26px}.o{line-height:41px;margin-left:20px}.o i{font:400 13px/41px "Liberation Sans"}`,
  `<div class="logo">${icon('butler',34,37,'margin-top:3px')}${fit('Jenkins',116,'name')}</div><div class="n">1</div>
   <div class="q">${icon('find16',16)}<span style="margin-left:2px">${fit('search',39)}</span></div>${icon('help16',16,16,'margin-top:11px')}
   <div class="u">${fit('siddhant shah',88)}</div><div class="o">${fit('<i>|</i> log out',50)}</div>`);

element('crumb-trail', `:host{display:flex;align-items:center;height:26px;background:#f5fdf1;border-bottom:1px solid #d0d6cd;color:#4d545d;padding:0 26px 0 17.500px}
  a{margin-left:auto;font-size:9px;color:#33338c;text-decoration:underline}`,
  `${fit('Jenkins',44)}${icon('crumb',5,8,'margin:1px 15px 0 22px')}${fit('maven_project',85.5)}${icon('crumb',5,8,'margin:1px 0 0 22px')}<a>${fit('ENABLE AUTO REFRESH',108.5)}</a>`);

element('page-scroll', `:host{display:flex;flex-direction:column;align-items:center;background:#f1f1f1}
  .th{width:11px;height:489px;background:#c1c1c1;margin-top:5px}
  .a{width:0;border:4px solid transparent;border-top:0;border-bottom:4px solid #a3a3a3;margin-top:6px}
  .z{width:0;border:4px solid transparent;border-bottom:0;border-top:4px solid #505050;margin:auto 0 6px}`,
  `<i class="a"></i><div class="th"></div><i class="z"></i>`);

element('side-task', `:host{display:flex;align-items:center;height:32px;font-size:14px;color:#2f3190;padding-left:2px}
  :host([visited]){color:#5c2070}ui-icon{margin-right:6px}`,
  el => { const n = el.getAttribute('icon'); return icon(n=='folder'?'folder24':n,24) + fit(el.textContent,el.getAttribute('w')); });

element('build-history', `:host{display:block;width:330px;height:400px;border:1px solid #ececec;border-radius:5px 5px 0 0}
  .h{display:flex;align-items:center;height:35px;background:#ececec;font-weight:700;padding:0 0 2px 14px}
  .h a{color:#2f3190;text-decoration:underline;margin-left:127.500px}
  .f{display:flex;justify-content:space-between;width:308px;height:24px;border:1px solid #a9a9a9;margin:10px 0 8px 10px;padding:0 5px 0 6px;line-height:22px;color:#757575}.f i{font-style:normal;color:#999;font-size:12px}`,
  `<div class="h">${icon('storm',18)}<span style="margin-left:12px">${fit('Build History',81)}</span><a>${fit('trend',33)}</a>${icon('minus',12,5,'margin:4px 0 0 4px')}</div>
   <div class="f">${fit('find',21)}<i>x</i></div><slot></slot>`);

element('build-row', `:host{display:flex;height:27px;padding-left:7px;font-size:12px;line-height:24px;color:#666}
  :host([tall]){height:31px}:host(:nth-child(odd)){background:#fbfbfb}
  ui-icon{margin-top:6px}b{width:60px;margin-left:5px;color:#000;text-decoration:underline}`,
  el => el.hasAttribute('n') ? `${icon(el.getAttribute('ball'),14)}<b>${fit(el.getAttribute('n'),el.getAttribute('n').length==3?20:13.500)}</b>${fit(el.textContent,el.textContent.length>20?124:117.500)}` : '');

element('workspace-view', `:host{display:block;padding:23px 0 0 15px}
  h1{margin:0;height:37px;font:700 26px/37px "Liberation Sans",sans-serif;color:#333}
  a{color:#2f3190;text-decoration:underline}a.v{color:#5c1766}
  .p{display:flex;align-items:center;height:40px;margin:11px 0 5px 2px;font-weight:700}
  .p a,.p span{margin-top:-2px}
  .p s{width:149px;height:24px;border:1px solid #a9a9a9;margin:0 0 0 3px}
  .r{display:flex;align-items:center;height:20px;padding-left:28px;color:#888}
  .r ui-icon{margin-top:1px}
  .z{display:flex;align-items:center;height:20px;margin:13px 0 0 277px}`,
  `<h1>${fit('Workspace of maven_project on master',492)}</h1>
   <div class="p">${icon('folder',44,42)}<a class="v" style="margin-left:2px">${fit('target',36)}</a><span style="margin-left:4px">/</span><s></s>${icon('go',16,16,'margin-top:2px')}</div>
   <div class="r">${icon('folder24',16,16,'margin-right:2px')}<a class="v">${fit('maven-archiver',90)}</a></div>
   <div class="r">${icon('text',14,16,'margin-right:4px')}<a>${fit('my-app-1.0-SNAPSHOT.jar',158)}</a><span style="margin-left:30px">${fit('Jan 31, 2019 1:41:32 PM',145)}</span><span style="margin-left:29px">${fit('1.92 KB',46)}</span><a class="v" style="margin-left:2px">${fit('view',26)}</a></div>
   <div class="z">${icon('zip',16,14)}<a>${fit('&nbsp;(all files in zip)',86)}</a></div>`);

/* Sets its text to the width in the "w" attribute: small differences by
   letter spacing, larger ones by horizontal scaling. */
element('fit-text', `:host{display:block;white-space:nowrap;flex:none}span{display:inline-block;transform-origin:0 50%;text-decoration:inherit}`,
  `<span><slot></slot></span>`, el => {
    const w = +el.getAttribute('w'), s = el.shadowRoot.querySelector('span');
    const own = s.getBoundingClientRect().width;
    if (!own) return;
    if (el.parentNode.nodeName === 'A' || el.parentNode.nodeName === 'B') s.style.textDecoration = 'underline';
    el.style.width = w + 'px';
    if (Math.abs(own / w - 1) < .05) s.style.letterSpacing = (w - own) / el.textContent.length + 'px';
    else s.style.transform = `scaleX(${w / own})`;
  });
</script>
</body>
</html>
